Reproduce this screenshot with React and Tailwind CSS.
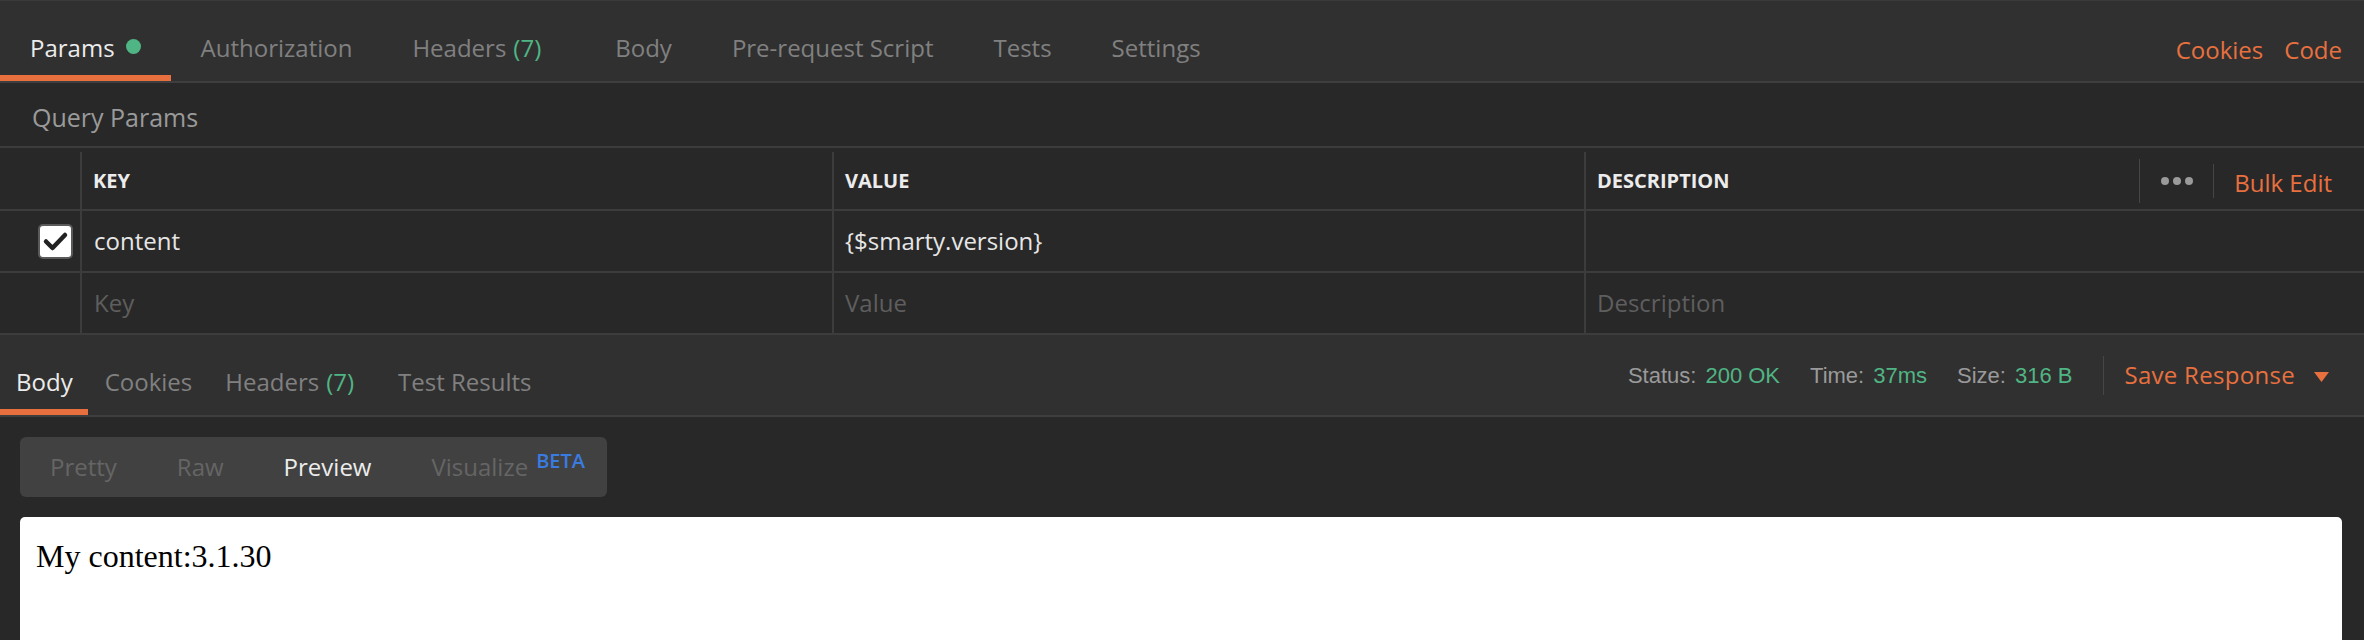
function Tab({ label, count, active, dot, className = "" }) {
  return (
    <div
      className={`flex h-full items-start pt-[29px] border-b-[6px] ${
        active ? "border-[#e8703f] text-[#ececec]" : "border-transparent text-[#808080]"
      } ${className}`}
    >
      <span>{label}</span>
      {count && <span className="ml-[7px] text-[#50b584]">{count}</span>}
      {dot && <span className="ml-[11px] mt-[9px] h-[15px] w-[15px] rounded-full bg-[#50b584]" />}
    </div>
  );
}

function Checkbox() {
  return (
    <div className="flex h-[35px] w-[35px] items-center justify-center rounded-[5px] border-2 border-[#5a5a5a] bg-white">
      <svg width="31" height="31" viewBox="0 0 31 31" fill="none">
        <polyline
          points="6,15.5 12.5,22 25,9"
          stroke="#222"
          strokeWidth="4.5"
          strokeLinecap="round"
          strokeLinejoin="round"
        />
      </svg>
    </div>
  );
}

function Row({ children, header }) {
  return (
    <div className={`flex border-b-2 border-[#3c3c3c] ${header ? "h-[63px] pt-[4px]" : "h-[62px]"}`}>
      {children}
    </div>
  );
}

function Cell({ children, className = "" }) {
  return (
    <div className={`flex items-center border-r-2 border-[#3c3c3c] pl-[11px] ${className}`}>{children}</div>
  );
}

export default function App() {
  return (
    <div className="flex h-[640px] w-[2364px] flex-col overflow-hidden bg-[#282828] font-['Open_Sans',sans-serif] text-[24px]">
      {/* request tabs */}
      <div className="flex h-[83px] shrink-0 justify-between border-t border-b-2 border-t-[#3a3a3a] border-b-[#3e3e3e] bg-[#303030]">
        <div className="flex">
          <Tab label="Params" active dot className="px-[30px]" />
          <Tab label="Authorization" className="px-[30px]" />
          <Tab label="Headers" count="(7)" className="pl-[30px] pr-[44px]" />
          <Tab label="Body" className="px-[30px]" />
          <Tab label="Pre-request Script" className="px-[30px]" />
          <Tab label="Tests" className="px-[30px]" />
          <Tab label="Settings" className="px-[30px]" />
        </div>
        <div className="flex items-start gap-[21px] pr-[22px] pt-[31px] text-[#e8703f]">
          <span>Cookies</span>
          <span>Code</span>
        </div>
      </div>

      {/* query params */}
      <div className="h-[63px] shrink-0 pl-[32px] pt-[16px] text-[25px] text-[#9a9a9a]">Query Params</div>

      <div className="shrink-0 border-t-2 border-[#3c3c3c]">
        <Row header>
          <div className="w-[82px] border-r-2 border-[#3c3c3c]" />
          <Cell className="w-[752px] text-[20px] font-bold text-[#ececec]">KEY</Cell>
          <Cell className="w-[752px] text-[20px] font-bold text-[#ececec]">VALUE</Cell>
          <div className="flex flex-1 items-center pl-[11px]">
            <span className="text-[20px] font-bold text-[#ececec]">DESCRIPTION</span>
            <div className="ml-auto flex items-center pr-[32px]">
              <div className="h-[44px] w-px bg-[#464646]" />
              <div className="ml-[21px] flex gap-[4px]">
                <span className="h-[8px] w-[8px] rounded-full bg-[#9a9a9a]" />
                <span className="h-[8px] w-[8px] rounded-full bg-[#9a9a9a]" />
                <span className="h-[8px] w-[8px] rounded-full bg-[#9a9a9a]" />
              </div>
              <div className="ml-[20px] h-[34px] w-px bg-[#464646]" />
              <span className="ml-[20px] mt-[4px] text-[#e8703f]">Bulk Edit</span>
            </div>
          </div>
        </Row>
        <Row>
          <div className="flex w-[82px] items-center border-r-2 border-[#3c3c3c] pl-[38px]">
            <Checkbox />
          </div>
          <Cell className="w-[752px] pl-[12px] text-[#e6e6e6]">content</Cell>
          <Cell className="w-[752px] text-[#e6e6e6]">{"{$smarty.version}"}</Cell>
          <div className="flex-1" />
        </Row>
        <Row>
          <div className="w-[82px] border-r-2 border-[#3c3c3c]" />
          <Cell className="w-[752px] pl-[12px] text-[#5e5e5e]">Key</Cell>
          <Cell className="w-[752px] text-[#5e5e5e]">Value</Cell>
          <div className="flex flex-1 items-center pl-[11px] text-[#5e5e5e]">Description</div>
        </Row>
      </div>

      {/* response tabs */}
      <div className="flex h-[82px] shrink-0 justify-between border-b-2 border-[#3e3e3e] bg-[#303030]">
        <div className="flex">
          <Tab label="Body" active className="pl-[16px] pr-[15px]" />
          <Tab label="Cookies" className="px-[17px]" />
          <Tab label="Headers" count="(7)" className="pl-[16px] pr-[28px]" />
          <Tab label="Test Results" className="px-[16px]" />
        </div>
        <div className="flex items-center pr-[35px]">
          <div className="flex items-center font-['Liberation_Sans',Arial,sans-serif] text-[22px]">
            <span className="text-[#9a9a9a]">Status:</span>
            <span className="ml-[9px] text-[#50b584]">200 OK</span>
            <span className="ml-[30px] text-[#9a9a9a]">Time:</span>
            <span className="ml-[9px] text-[#50b584]">37ms</span>
            <span className="ml-[30px] text-[#9a9a9a]">Size:</span>
            <span className="ml-[9px] text-[#50b584]">316 B</span>
          </div>
          <div className="ml-[31px] h-[39px] w-px bg-[#464646]" />
          <span className="ml-[20px] tracking-[0.3px] text-[#e8703f]">Save Response</span>
          <svg className="ml-[19px] mt-[4px]" width="15" height="10" viewBox="0 0 15 10">
            <polygon points="0,0 15,0 7.5,10" fill="#e8703f" />
          </svg>
        </div>
      </div>

      {/* response body */}
      <div className="flex min-h-0 flex-1 flex-col px-[20px] pt-[20px] pr-[22px]">
        <div className="flex h-[60px] self-start rounded-[6px] bg-[#414141]">
          <div className="flex items-center px-[30px] text-[#656565]">Pretty</div>
          <div className="flex items-center px-[30px] text-[#656565]">Raw</div>
          <div className="flex items-center px-[30px] text-[#ececec]">Preview</div>
          <div className="flex items-center pl-[30px] pr-[22px] text-[#656565]">
            <span>Visualize</span>
            <span className="ml-[8px] mt-[9px] self-start text-[20px] font-semibold text-[#3a7be0]">BETA</span>
          </div>
        </div>
        <div className="mt-[20px] flex-1 rounded-t-[5px] bg-white pl-[16px] pt-[15px] font-['Liberation_Serif','Times_New_Roman',serif] text-[32px] text-black">
          My content:3.1.30
        </div>
      </div>
    </div>
  );
}
